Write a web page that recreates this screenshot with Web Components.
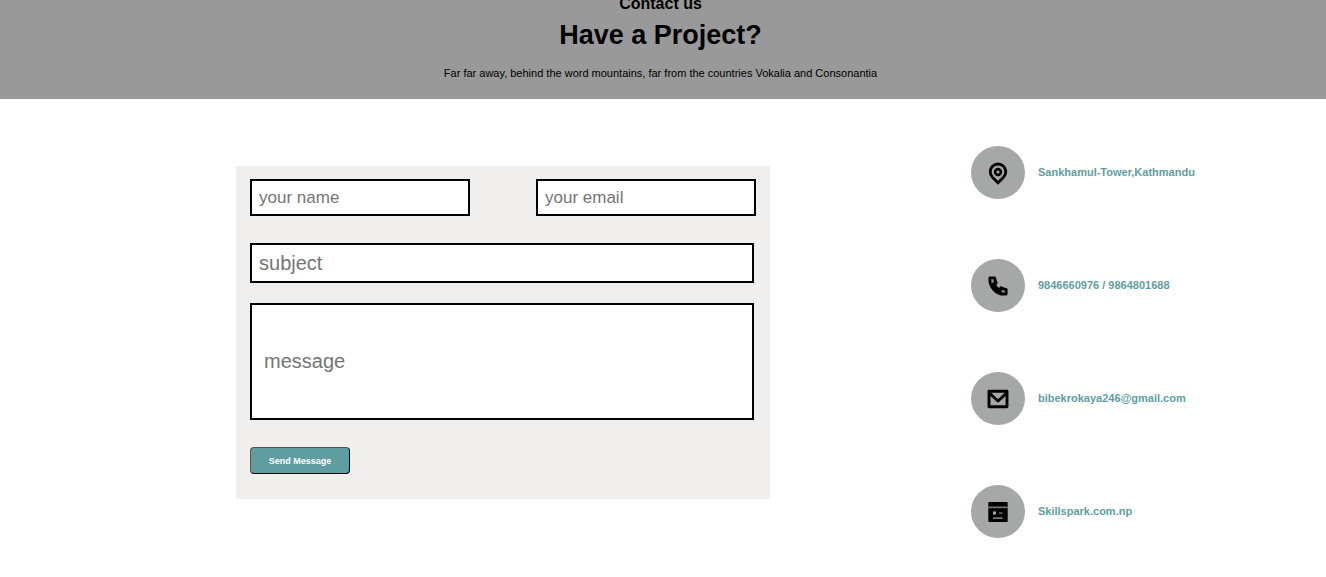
<!DOCTYPE html>
<html lang="en">
<head>
<meta charset="utf-8">
<meta name="viewport" content="width=device-width, initial-scale=1">
<title>Contact us</title>
<style>
body { margin: 0; background: #fff; color: #000; font-family: "Liberation Sans", Arial, sans-serif; }
</style>
</head>
<body>
<contact-page></contact-page>
<script>
const define = (name, html, setup) => {
  const template = document.createElement('template');
  template.innerHTML = html;
  customElements.define(name, class extends HTMLElement {
    constructor() {
      super();
      this.attachShadow({ mode: 'open' }).append(template.content.cloneNode(true));
    }
    connectedCallback() { if (setup) setup(this, this.shadowRoot); }
  });
};

define('page-banner', `
<style>
:host { display: block; overflow: hidden; background: #999; text-align: center; padding: 0 5px 19px 0; }
h2, h1, p { margin: 0; }
h2 { font-size: 16px; line-height: 18px; margin-top: -5px; }
h1 { font-size: 27px; line-height: 32px; margin-top: 6px; }
p { font-size: 11px; line-height: 14px; margin-top: 15px; }
</style>
<h2><slot name="eyebrow"></slot></h2>
<h1><slot name="title"></slot></h1>
<p><slot></slot></p>`);

define('contact-form', `
<style>
:host { display: block; background: #f0efed; }
form { display: flex; flex-direction: column; align-items: flex-start; padding: 13px 14px 25px; }
.row { display: flex; justify-content: space-between; gap: 16px; align-self: stretch; margin-bottom: 27px; }
input, button { font-family: inherit; box-sizing: border-box; margin: 0; }
input { border: 2px solid #000; background: #fff; padding: 0 7px; border-radius: 0; min-width: 0; }
input::placeholder { color: #757575; }
.row input { width: 220px; height: 37px; font-size: 17px; }
.wide { width: calc(100% - 2px); font-size: 20px; height: 40px; margin-bottom: 20px; }
.message { height: 117px; padding: 0 12px; margin-bottom: 27px; }
button { width: 100px; height: 27px; padding: 0; border: 1px outset #000; border-radius: 4px; background: #5f9ea0; color: #fff; font-size: 9px; font-weight: bold; }
</style>
<form>
  <div class="row">
    <input type="text" placeholder="your name" aria-label="Your name">
    <input type="email" placeholder="your email" aria-label="Your email">
  </div>
  <input class="wide" type="text" placeholder="subject" aria-label="Subject">
  <input class="wide message" type="text" placeholder="message" aria-label="Message">
  <button type="button">Send Message</button>
</form>`);

const icons = {
  pin: `<path d="M12 3C7.700 3 4.200 6.400 4.200 10.700c0 2.300 1 4.200 2.500 5.800L12 21.700l5.300-5.200c1.500-1.600 2.500-3.500 2.500-5.800C19.800 6.400 16.300 3 12 3z" fill="none" stroke="#000" stroke-width="2.800"/><circle cx="12" cy="11" r="2.900" fill="none" stroke="#000" stroke-width="2.600"/>`,
  phone: `<path d="M9.400 10.700a10.600 10.600 0 0 0 4 4l.8-1.300a1 1 0 0 1 1.300-.3 11.400 11.400 0 0 0 4.600 1.400 1 1 0 0 1 .9 1v4.400a1 1 0 0 1-.9 1C10.500 22 2.500 14.500 3 3.900A1 1 0 0 1 4.100 3h4.400a1 1 0 0 1 1 .9 11.400 11.400 0 0 0 1.400 4.600 1 1 0 0 1-.3 1.300z" stroke="#000" stroke-width="1.200"/><path d="M5.200 5.300h2.200l.5 2.700-2.200 1.400zM15 18l1.200-1.900 2.700.6v2.100z" fill="#8b8d8c"/>`,
  mail: `<path d="M3 4.200h18v15.600H3zM3 5.700l9 8.300 9-8.300" fill="none" stroke="#000" stroke-width="2.900" stroke-linejoin="round"/>`,
  site: `<path d="M3.500 2h17c.8 0 1.200.4 1.200 1.200v17.600c0 .8-.4 1.200-1.200 1.200h-17c-.8 0-1.200-.4-1.200-1.200V3.200C2.300 2.400 2.700 2 3.500 2z"/><path d="M2.300 6.500h19.400v1.700H2.300z" fill="#777"/><path d="M7 11.500h3v3H7zM7 17.500h9.500v1.200H7z" fill="#a6a8a7"/><path d="M13 12.500h3.500v1.200H13z" fill="#858786"/>`
};

define('contact-item', `
<style>
:host { display: flex; align-items: center; gap: 13px; }
.disc { flex: none; display: grid; place-items: center; width: 54px; height: 53px; border-radius: 50%; background: #a6a8a7; }
svg { display: block; width: 24px; height: 24px; }
a { color: #5f9ea0; font-size: 11px; line-height: 15px; font-weight: bold; text-decoration: none; }
</style>
<span class="disc"><svg viewBox="0 0 24 24" aria-hidden="true"></svg></span>
<a><slot></slot></a>`, (host, root) => {
  root.querySelector('svg').innerHTML = icons[host.getAttribute('icon')];
  root.querySelector('a').href = host.getAttribute('href');
});

define('contact-page', `
<style>
:host { display: block; }
main { display: grid; grid-template-columns: 534fr 355fr; column-gap: 201px; align-items: start; margin-left: 17.8%; }
contact-form { margin-top: 67px; }
address { font-style: normal; display: grid; gap: 60px; padding: 47px 0 38px; }
</style>
<page-banner><span slot="eyebrow">Contact us</span><span slot="title">Have a Project?</span>Far far away, behind the word mountains, far from the countries Vokalia and Consonantia</page-banner>
<main>
  <contact-form></contact-form>
  <address>
    <contact-item icon="pin" href="#map">Sankhamul-Tower,Kathmandu</contact-item>
    <contact-item icon="phone" href="tel:9846660976">9846660976 / 9864801688</contact-item>
    <contact-item icon="mail" href="mailto:bibekrokaya246@gmail.com">bibekrokaya246@gmail.com</contact-item>
    <contact-item icon="site" href="#site">Skillspark.com.np</contact-item>
  </address>
</main>`);
</script>
</body>
</html>
